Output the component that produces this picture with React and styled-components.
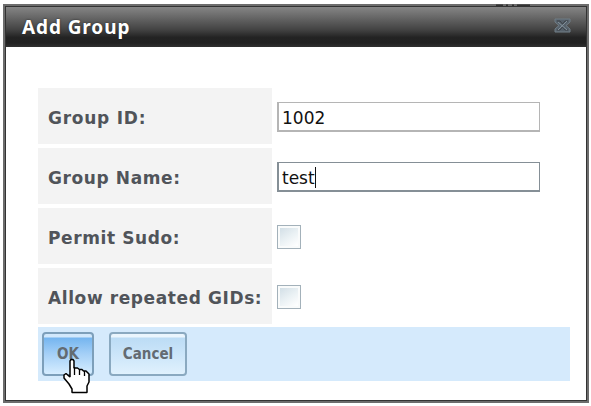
import React from "react";
import styled, { createGlobalStyle } from "styled-components";

const GlobalStyle = createGlobalStyle`
  * { box-sizing: border-box; }
  body { margin: 0; background: #fff; overflow: hidden; }
`;

const Page = styled.main`
  position: relative;
  width: 591px;
  height: 406px;
  padding: 4px 2px 2px 3px;
  background: #fff;
  font-family: "DejaVu Sans", Verdana, sans-serif;
`;

const Dialog = styled.section`
  width: 586px;
  height: 399px;
  border: 2px solid #6c6c6c;
  background: #fff;
`;

const DialogInner = styled.div`
  height: 100%;
  border: 1px solid #333;
`;

const TitleBar = styled.header`
  display: flex;
  align-items: center;
  justify-content: space-between;
  height: 40px;
  padding: 0 15px 1px 16px;
  background: linear-gradient(#858585 0%, #686868 25%, #414141 58%, #232323 76%, #222 90%, #303030 100%);
`;

const Title = styled.h1`
  margin: 0;
  color: #fff;
  font: bold 19px/24px "Noto Sans", sans-serif;
  letter-spacing: 0.9px;
  text-shadow: 0 0 2px #222;
`;

const CloseIcon = styled.svg`
  width: 17px;
  height: 15px;
  margin-top: -2px;
`;

const Form = styled.form`
  display: flex;
  flex-direction: column;
  gap: 4px;
  width: 532px;
  margin: 41px 0 0 32px;
`;

const Row = styled.div`
  display: grid;
  grid-template-columns: 234px 1fr;
  column-gap: 5px;
  align-items: center;
  height: 56px;
`;

const Label = styled.label`
  display: flex;
  align-items: center;
  height: 56px;
  padding: 4px 0 0 10px;
  background: #f3f3f3;
  color: #50545a;
  font-size: 17px;
  font-weight: bold;
  letter-spacing: ${(p) => p.$spacing || "0.6px"};
  white-space: nowrap;
`;

const Field = styled.div`
  display: flex;
  align-items: center;
  width: 263px;
  height: 30px;
  margin-top: 2px;
  padding: 2px 0 0 3px;
  border: solid ${(p) => (p.$active ? "#858f96" : "#b5b5b5")};
  border-width: 1px 1px 2px 2px;
  background: #fff;
  color: #111;
  font-size: 17px;
`;

const Caret = styled.span`
  width: 1px;
  height: 21px;
  background: #111;
`;

const Checkbox = styled.span`
  width: 24px;
  height: 24px;
  margin-top: 2px;
  border: 1px solid #a3b1ba;
  background: linear-gradient(145deg, #d0dde5 5%, #eaf1f4 50%, #fff 90%);
  box-shadow: inset 0 0 0 2px #f9fbfb;
`;

const Actions = styled.footer`
  display: flex;
  gap: 15px;
  height: 54px;
  margin-top: -1px;
  padding: 5px 4px;
  background: #d5eafc;
`;

const Button = styled.button`
  width: ${(p) => p.$width};
  height: 44px;
  padding: 0;
  border: 2px solid ${(p) => (p.$primary ? "#7d9fba" : "#8aa9c0")};
  border-radius: 4px;
  background: ${(p) =>
    p.$primary
      ? "linear-gradient(#d1e8fc 0 3px, #75b5ef 4px, #a5d0f7 50%, #d6edff 100%)"
      : "linear-gradient(#eaf5fd 0 3px, #bcdcf5 4px, #cbe5f9 50%, #e0f1fd 100%)"};
  color: #636b72;
  font: bold 15px "DejaVu Sans Condensed", "DejaVu Sans", sans-serif;
  font-stretch: condensed;
`;

const Cursor = styled.svg`
  position: absolute;
  left: 62px;
  top: 358px;
  width: 30px;
  height: 37px;
`;

const Remnant = styled.svg`
  position: absolute;
  left: 495px;
  top: 4px;
  width: 36px;
  height: 3px;
`;

export default function App() {
  return (
    <Page>
      <GlobalStyle />
      <Dialog role="dialog" aria-label="Add Group">
        <DialogInner>
          <TitleBar>
            <Title>Add Group</Title>
            <CloseIcon viewBox="0 0 17 15" fill="none" aria-label="Close">
              <path d="M1 1H16V4L12 7.5L16 11V14H1V11L5 7.5L1 4Z" fill="#56616b" stroke="#717e87" />
              <path d="M3 3H6L8.5 6L11 3H14M3 12H6L8.5 9L11 12H14" stroke="#3c4248" />
              <path d="M4 4L13 12M13 3L4 12" stroke="#82909a" />
            </CloseIcon>
          </TitleBar>
          <Form>
            <Row>
              <Label $spacing="0.75px">Group ID:</Label>
              <Field>1002</Field>
            </Row>
            <Row>
              <Label>Group Name:</Label>
              <Field $active>test<Caret /></Field>
            </Row>
            <Row>
              <Label>Permit Sudo:</Label>
              <Checkbox role="checkbox" aria-checked="false" />
            </Row>
            <Row>
              <Label>Allow repeated GIDs:</Label>
              <Checkbox role="checkbox" aria-checked="false" />
            </Row>
            <Actions>
              <Button type="button" $primary $width="52px">OK</Button>
              <Button type="button" $width="78px">Cancel</Button>
            </Actions>
          </Form>
        </DialogInner>
      </Dialog>
      <Remnant viewBox="0 0 36 3" aria-hidden="true">
        <path d="M1 1.5H8M11 1.5H13M17 1.5H19M22 1.5H35" stroke="#333" strokeWidth="2" />
      </Remnant>
      <Cursor viewBox="0 0 30 37" aria-hidden="true">
        <path
          d="M8 3L9 1.5H11L12 3V10H15.5L17.5 11.5H20L21.5 13H24L27 16V24L25 28V34.5H10V31L7 26L2 20V17L4 15.5L8 19Z"
          fill="#fff" stroke="#000" strokeWidth="1.5" strokeLinejoin="bevel"
        />
        <path d="M12.5 9V17M17.5 11V17M22.5 13V18" fill="none" stroke="#000" strokeWidth="1.3" />
      </Cursor>
    </Page>
  );
}
